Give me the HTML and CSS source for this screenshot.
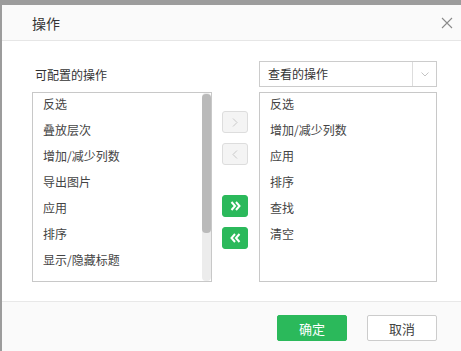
FILE: index.html
```html
<!DOCTYPE html>
<html lang="zh-CN">
<head>
    <meta charset="UTF-8">
    <title>操作</title>
    <link rel="stylesheet" href="styles.css">
</head>
<body>
    <div class="dialog">
        <div class="dialog-header">
            <span class="dialog-title">操作</span>
            <svg class="close-icon" width="12" height="12" viewBox="0 0 12 12">
                <path d="M1 1 L11 11 M11 1 L1 11" stroke="#8a8a8a" stroke-width="1.1" fill="none"/>
            </svg>
        </div>

        <div class="dialog-body">
            <div class="transfer">
                <div class="col-label">可配置的操作</div>
                <div></div>
                <div class="select-box">
                    <span class="select-text">查看的操作</span>
                    <span class="select-arrow">
                        <svg width="8" height="5" viewBox="0 0 8 5">
                            <path d="M0.5 0.5 L4 4 L7.5 0.5" stroke="#c4c4c4" stroke-width="1" fill="none"/>
                        </svg>
                    </span>
                </div>

                <div class="list-wrap">
                    <ul class="op-list">
                        <li>反选</li>
                        <li>叠放层次</li>
                        <li>增加/减少列数</li>
                        <li>导出图片</li>
                        <li>应用</li>
                        <li>排序</li>
                        <li>显示/隐藏标题</li>
                    </ul>
                    <div class="scrollbar"><div class="scroll-thumb"></div></div>
                </div>

                <div class="move-buttons">
                    <button class="move-btn disabled">
                        <svg width="6" height="9" viewBox="0 0 6 9"><path d="M1 0.5 L5 4.5 L1 8.5" stroke="#c8c8c8" fill="none"/></svg>
                    </button>
                    <button class="move-btn disabled">
                        <svg width="6" height="9" viewBox="0 0 6 9"><path d="M5 0.5 L1 4.5 L5 8.5" stroke="#c8c8c8" fill="none"/></svg>
                    </button>
                    <button class="move-btn green all-right">
                        <svg width="11" height="10" viewBox="0 0 11 10"><path d="M1.5 1 L5 5 L1.5 9 M6 1 L9.5 5 L6 9" stroke="#fff" stroke-width="2" fill="none"/></svg>
                    </button>
                    <button class="move-btn green">
                        <svg width="11" height="10" viewBox="0 0 11 10"><path d="M5 1 L1.5 5 L5 9 M9.5 1 L6 5 L9.5 9" stroke="#fff" stroke-width="2" fill="none"/></svg>
                    </button>
                </div>

                <div class="list-wrap right">
                    <ul class="op-list">
                        <li>反选</li>
                        <li>增加/减少列数</li>
                        <li>应用</li>
                        <li>排序</li>
                        <li>查找</li>
                        <li>清空</li>
                    </ul>
                </div>
            </div>
        </div>

        <div class="dialog-footer">
            <button class="btn btn-primary">确定</button>
            <button class="btn">取消</button>
        </div>
    </div>
</body>
</html>
```

FILE: styles.css
```css
/* backdrop + dialog */
html, body {
    height: 100%;
}

body {
    margin: 0;
    padding: 5px 0 0 2px;
    box-sizing: border-box;
    background-color: #9c9c9c;
    font-family: 'Noto Sans CJK SC', 'Noto Sans', sans-serif;
    font-size: 12px;
    color: #333;
    overflow: hidden;
}

.dialog {
    background-color: #fff;
    height: 100%;
    display: flex;
    flex-direction: column;
}

.dialog-header {
    height: 35px;
    flex: none;
    display: flex;
    align-items: center;
    justify-content: space-between;
    padding: 0 8px 0 30px;
    background-color: #fafafa;
    border-bottom: 1px solid #e6e6e6;
}

.dialog-title {
    font-size: 14px;
    color: #333;
}

.dialog-body {
    height: 240px;
    flex: none;
    padding-top: 20px;
}

.transfer {
    display: grid;
    grid-template-columns: 180px 26px 179px;
    grid-template-rows: 26px 190px;
    column-gap: 10px;
    row-gap: 5px;
    padding-left: 30px;
}

.col-label {
    align-self: center;
    padding-left: 3px;
    color: #333;
}

.select-box {
    grid-column: 3;
    display: flex;
    border: 1px solid #ccc;
    box-sizing: border-box;
    margin-left: 1px;
}

.select-text {
    flex: 1;
    line-height: 24px;
    padding-left: 8px;
}

.select-arrow {
    width: 23px;
    border-left: 1px solid #ddd;
    display: flex;
    align-items: center;
    justify-content: center;
}

.list-wrap {
    position: relative;
    border: 1px solid #c8c8c8;
    box-sizing: border-box;
    overflow: hidden;
}

.list-wrap.right {
    margin-left: 1px;
}

.op-list {
    list-style: none;
    margin: 0;
    padding: 0;
}

.op-list li {
    height: 26px;
    line-height: 22px;
    padding-left: 10px;
    color: #444;
}

/* fake scrollbar laid over the left list */
.scrollbar {
    position: absolute;
    top: 0;
    right: 0;
    bottom: 0;
    width: 9px;
    background-color: #ececec;
    border-radius: 4px;
}

.scroll-thumb {
    margin-top: 1px;
    height: 139px;
    background-color: #bababa;
    border-radius: 4px;
}

.move-buttons {
    display: flex;
    flex-direction: column;
    padding-top: 19px;
}

.move-btn {
    width: 26px;
    height: 22px;
    margin: 0 0 10px 0;
    padding: 0;
    border: 1px solid #ddd;
    border-radius: 3px;
    background-color: #f4f4f4;
    display: flex;
    align-items: center;
    justify-content: center;
}

.move-btn.green {
    background-color: #2bb95b;
    border-color: #2bb95b;
}

.move-btn.all-right {
    margin-top: 20px;
}

.dialog-footer {
    flex: 1;
    background-color: #fafafa;
    border-top: 1px solid #e8e8e8;
    display: flex;
    justify-content: flex-end;
    align-items: flex-start;
    gap: 20px;
    padding: 13px 24px 0 0;
}

.btn {
    width: 70px;
    height: 26px;
    border: 1px solid #ccc;
    border-radius: 2px;
    background-color: #fff;
    font-family: inherit;
    font-size: 13px;
    color: #444;
    padding: 0;
}

.btn-primary {
    background-color: #2bb95b;
    border-color: #2bb95b;
    color: #fff;
}
```
